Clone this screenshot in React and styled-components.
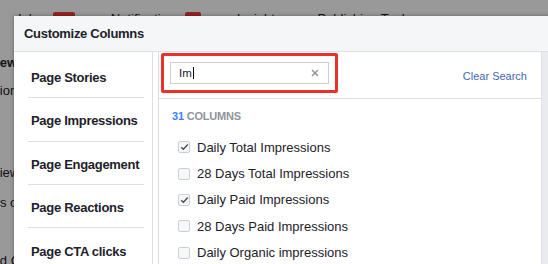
import React from "react";
import styled, { createGlobalStyle } from "styled-components";

const colors = {
  text: "#1d2129",
  muted: "#90949c",
  border: "#dddfe2",
  inputBorder: "#ccd0d5",
  headerBg: "#f5f6f7",
  strip: "#e9ebee",
  link: "#4267b2",
  count: "#4080ff",
  highlight: "#e8322b",
  badge: "#fa3e3e",
};

const GlobalStyle = createGlobalStyle`
  html, body {
    margin: 0;
    padding: 0;
    width: 548px;
    height: 264px;
    overflow: hidden;
    background: #fff;
    font-family: "Liberation Sans", Arial, Helvetica, sans-serif;
  }
`;

const StyledPage = styled.div`
  position: relative;
  width: 548px;
  height: 264px;
  overflow: hidden;
  background: #fff;
`;

const StyledTabs = styled.div`
  display: flex;
  align-items: flex-start;
  padding: 11px 0 0 18px;
  font-size: 13px;
  line-height: 15px;
  color: ${colors.text};
`;

const StyledTab = styled.div`
  display: flex;
  align-items: flex-start;
  gap: 3px;
  margin-right: 36px;
  white-space: nowrap;
`;

const StyledBadge = styled.span`
  display: inline-block;
  width: ${(p) => p.width}px;
  height: 14px;
  margin-top: 1px;
  border-radius: 2px;
  background: ${colors.badge};
`;

const StyledBackdropText = styled.div`
  width: 14px;
  overflow: hidden;
  display: flex;
  flex-direction: column;
  padding-top: 29px;
  font-size: 13px;
  color: ${colors.text};
  white-space: nowrap;
`;

const StyledBackdropLine = styled.div`
  margin-left: ${(p) => p.shift}px;
  margin-top: ${(p) => p.gap}px;
  font-weight: ${(p) => (p.bold ? "bold" : "normal")};
  line-height: 15px;
`;

const StyledOverlay = styled.div`
  position: absolute;
  inset: 0;
  background: rgba(0, 0, 0, 0.4);
`;

const StyledModal = styled.div`
  position: absolute;
  left: 14px;
  top: 16px;
  width: 620px;
  height: 300px;
  display: flex;
  flex-direction: column;
  background: #fff;
  box-shadow: 0 0 4px rgba(0, 0, 0, 0.35);
`;

const StyledHeader = styled.div`
  height: 35px;
  flex-shrink: 0;
  display: flex;
  align-items: center;
  padding: 0 10px;
  background: ${colors.headerBg};
  border-bottom: 1px solid ${colors.border};
  font-size: 13px;
  font-weight: bold;
  letter-spacing: -0.3px;
  color: ${colors.text};
`;

const StyledBody = styled.div`
  flex: 1;
  display: flex;
`;

const StyledSidebar = styled.div`
  width: 139px;
  flex-shrink: 0;
  box-sizing: border-box;
  padding-top: 3px;
  border-right: 1px solid ${colors.border};
`;

const StyledSideItem = styled.div`
  height: 43.3px;
  box-sizing: border-box;
  display: flex;
  align-items: center;
  margin: 0 8px 0 14px;
  padding: 3px 0 0 3px;
  border-bottom: ${(p) => (p.last ? "none" : `1px solid ${colors.border}`)};
  font-size: 13px;
  font-weight: bold;
  letter-spacing: -0.3px;
  color: ${colors.text};
  white-space: nowrap;
`;

const StyledMain = styled.div`
  width: 383px;
  flex-shrink: 0;
  box-sizing: border-box;
  margin-left: 5px;
  border-left: 1px solid ${colors.border};
`;

const StyledSearchRow = styled.div`
  height: 47px;
  box-sizing: border-box;
  display: flex;
  justify-content: space-between;
  align-items: flex-start;
  padding: 1px 14px 0 2px;
  border-bottom: 1px solid ${colors.border};
`;

const StyledHighlight = styled.div`
  border: 3px solid ${colors.highlight};
  border-radius: 2px;
  padding: 6px;
`;

const StyledInput = styled.div`
  width: 159px;
  height: 22px;
  box-sizing: border-box;
  display: flex;
  align-items: center;
  padding: 0 9px 0 8px;
  border: 1px solid ${colors.inputBorder};
  font-size: 11.5px;
  color: ${colors.text};
`;

const StyledCaret = styled.span`
  width: 1px;
  height: 12px;
  margin-left: 1px;
  background: #000;
`;

const StyledSpacer = styled.span`
  flex: 1;
`;

const StyledClearLink = styled.a`
  align-self: center;
  font-size: 11px;
  color: ${colors.link};
  text-decoration: none;
  cursor: pointer;
`;

const StyledCount = styled.div`
  padding: 11px 0 0 13px;
  font-size: 11px;
  line-height: 13px;
  font-weight: bold;
  letter-spacing: -0.2px;
  color: ${colors.muted};

  span {
    color: ${colors.count};
  }
`;

const StyledList = styled.div`
  margin-top: 11px;
  padding-left: 19px;
`;

const StyledOption = styled.label`
  height: 26.4px;
  display: flex;
  align-items: center;
  gap: 7px;
  font-size: 13px;
  color: ${colors.text};
  white-space: nowrap;
`;

const StyledCheckbox = styled.span`
  width: 12px;
  height: 12px;
  box-sizing: border-box;
  display: flex;
  align-items: center;
  justify-content: center;
  border: 1px solid ${colors.inputBorder};
  border-radius: 2px;
  background: #f6f7f9;
`;

const StyledStrip = styled.div`
  flex: 1;
  background: ${colors.strip};
  border-left: 1px solid ${colors.border};
`;

const tabs = [
  { label: "Inbox", badge: 22 },
  { label: "Notifications", badge: 16 },
  { label: "Insights" },
  { label: "Publishing Tools" },
];

const backdropLines = [
  { text: "Preview", shift: -32, gap: 0, bold: true },
  { text: "Action", shift: -19, gap: 13 },
  { text: "Preview", shift: -27, gap: 67 },
  { text: "Views of", shift: -28, gap: 15 },
  { text: "Paid Clicks", shift: -19, gap: 43 },
];

const sections = [
  "Page Stories",
  "Page Impressions",
  "Page Engagement",
  "Page Reactions",
  "Page CTA clicks",
];

const columns = [
  { label: "Daily Total Impressions", checked: true },
  { label: "28 Days Total Impressions", checked: false },
  { label: "Daily Paid Impressions", checked: true },
  { label: "28 Days Paid Impressions", checked: false },
  { label: "Daily Organic impressions", checked: false },
];

const CheckIcon = () => (
  <svg width="9" height="8" viewBox="0 0 9 8">
    <path d="M1.2 4.2 L3.4 6.3 L7.8 1.6" fill="none" stroke="#4b4f56" strokeWidth="1.4" />
  </svg>
);

const CloseIcon = () => (
  <svg width="8" height="8" viewBox="0 0 8 8">
    <path d="M1 1 L7 7 M7 1 L1 7" stroke={colors.muted} strokeWidth="1.5" />
  </svg>
);

const App = () => {
  return (
    <StyledPage>
      <GlobalStyle />
      <StyledTabs>
        {tabs.map((tab) => (
          <StyledTab key={tab.label}>
            {tab.label}
            {tab.badge && <StyledBadge width={tab.badge} />}
          </StyledTab>
        ))}
      </StyledTabs>
      <StyledBackdropText>
        {backdropLines.map((line, i) => (
          <StyledBackdropLine key={i} shift={line.shift} gap={line.gap} bold={line.bold}>
            {line.text}
          </StyledBackdropLine>
        ))}
      </StyledBackdropText>
      <StyledOverlay />
      <StyledModal>
        <StyledHeader>Customize Columns</StyledHeader>
        <StyledBody>
          <StyledSidebar>
            {sections.map((section, i) => (
              <StyledSideItem key={section} last={i === sections.length - 1}>
                {section}
              </StyledSideItem>
            ))}
          </StyledSidebar>
          <StyledMain>
            <StyledSearchRow>
              <StyledHighlight>
                <StyledInput>
                  Im
                  <StyledCaret />
                  <StyledSpacer />
                  <CloseIcon />
                </StyledInput>
              </StyledHighlight>
              <StyledClearLink>Clear Search</StyledClearLink>
            </StyledSearchRow>
            <StyledCount>
              <span>31</span> COLUMNS
            </StyledCount>
            <StyledList>
              {columns.map((column) => (
                <StyledOption key={column.label}>
                  <StyledCheckbox>{column.checked && <CheckIcon />}</StyledCheckbox>
                  {column.label}
                </StyledOption>
              ))}
            </StyledList>
          </StyledMain>
          <StyledStrip />
        </StyledBody>
      </StyledModal>
    </StyledPage>
  );
};

export default App;
